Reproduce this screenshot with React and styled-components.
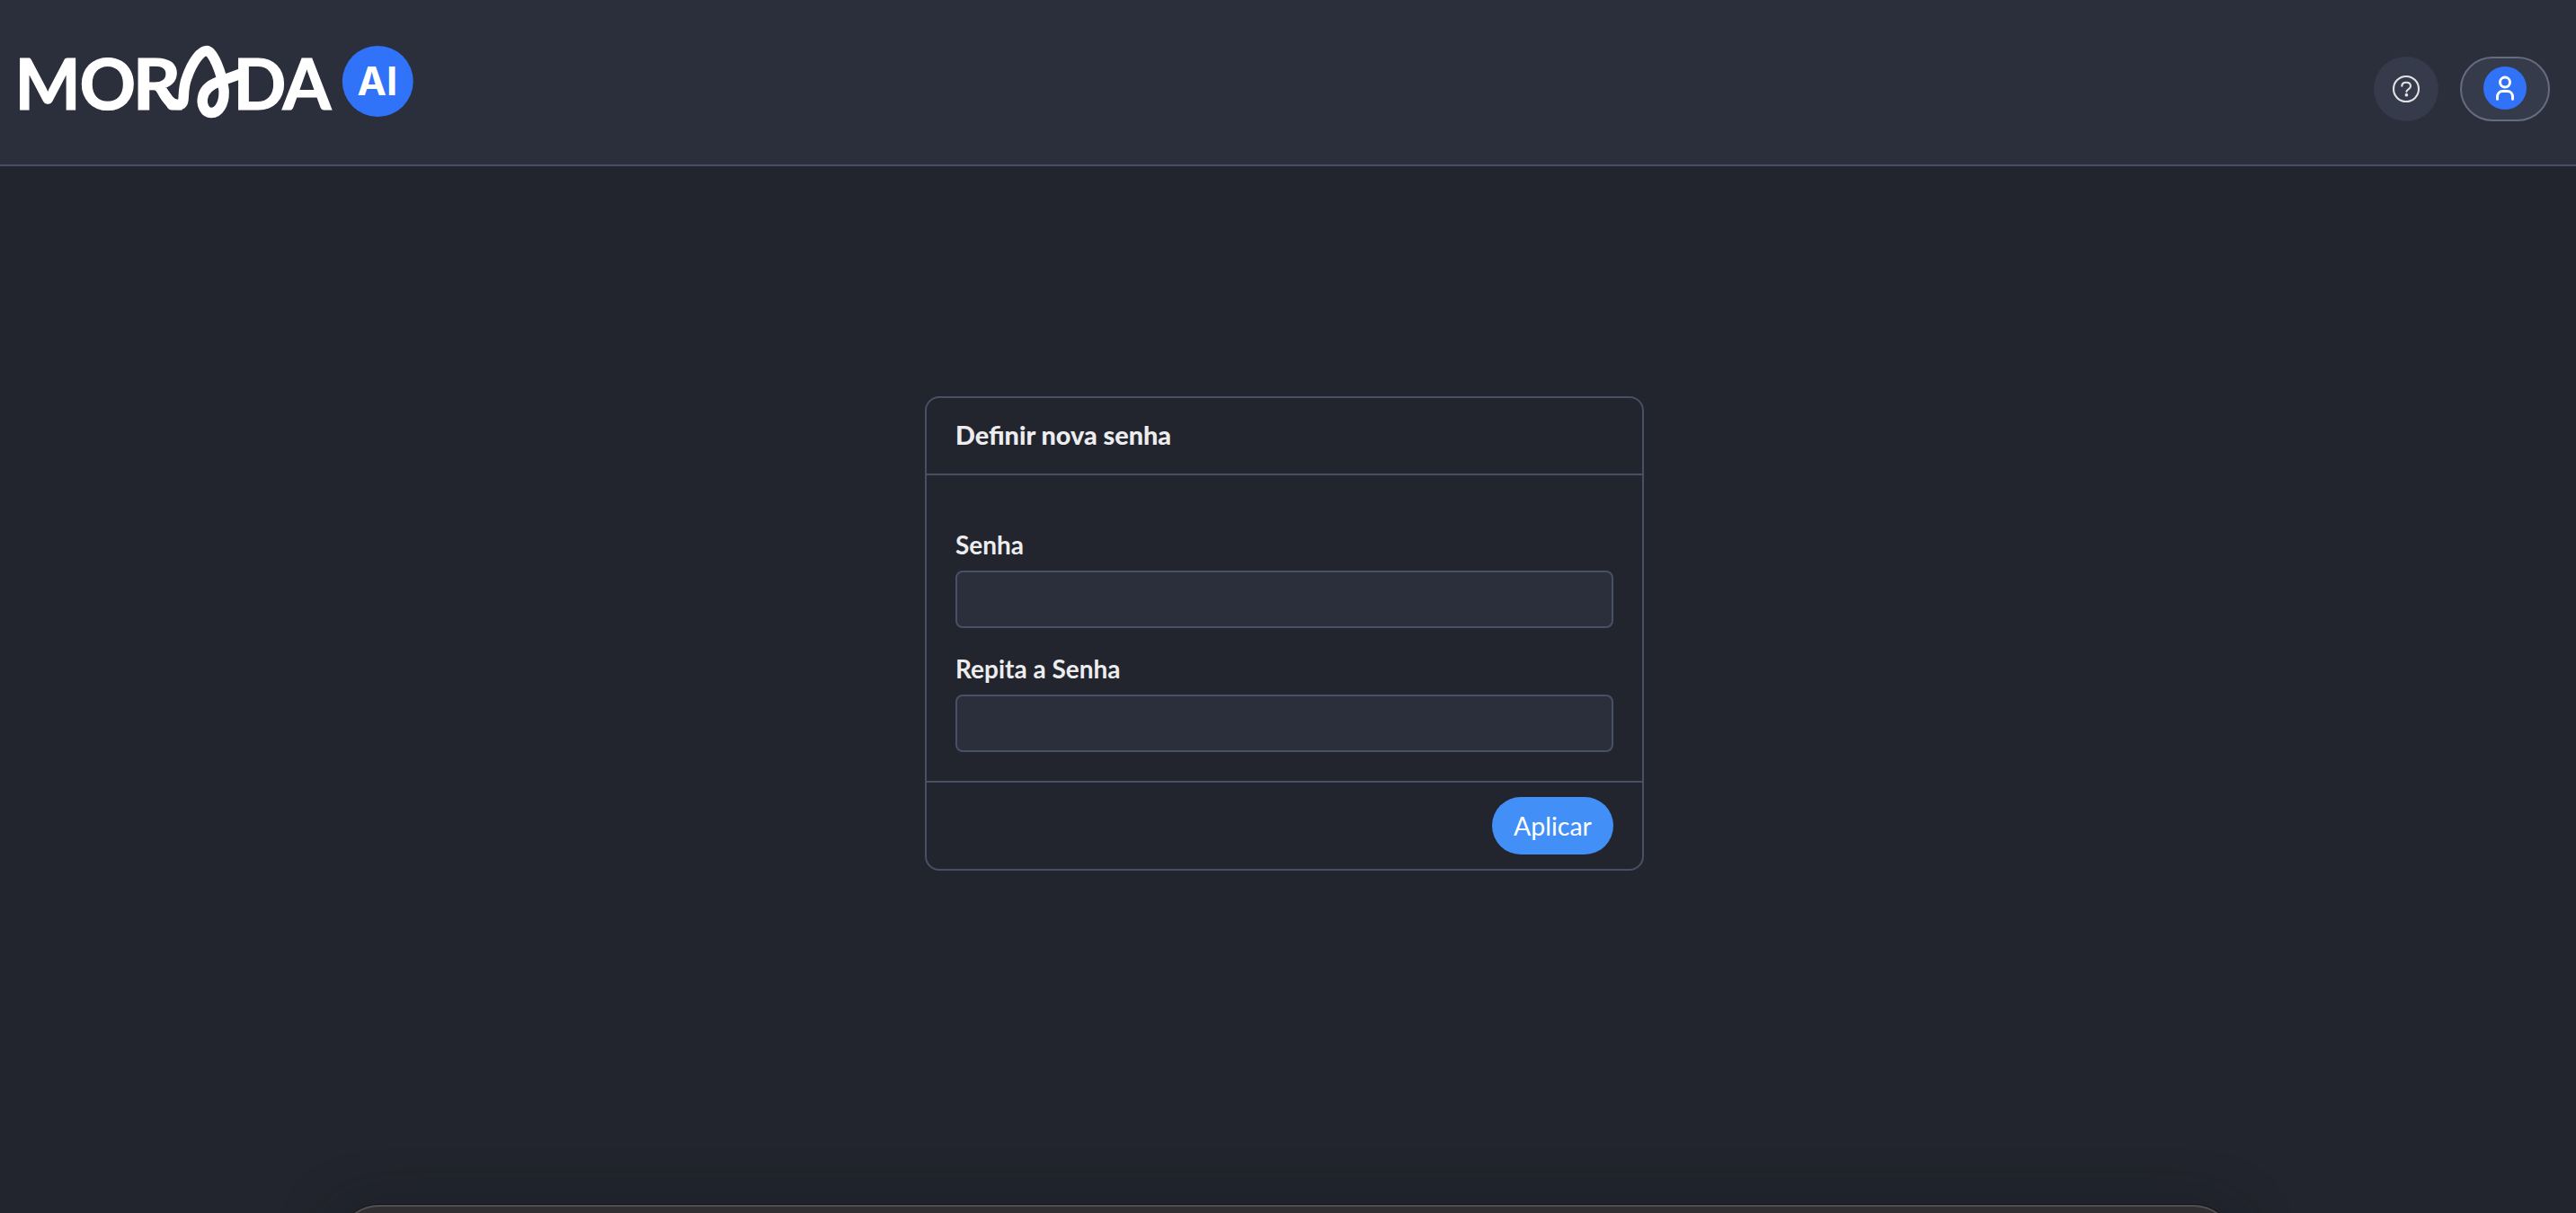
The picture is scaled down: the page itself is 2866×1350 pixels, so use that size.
import styled, { createGlobalStyle, ThemeProvider } from "styled-components";

const theme = {
  page: "#22252d",
  surface: "#2b2f3b",
  raised: "#363b4b",
  line: "#495066",
  pillLine: "#666c80",
  text: "#ededf0",
  brand: "#3072f8",
  button: "#428ff7",
};

const GlobalStyle = createGlobalStyle`
  * {
    box-sizing: border-box;
  }
  body {
    margin: 0;
    background: ${theme.page};
    color: ${theme.text};
    font-family: Lato, "Liberation Sans", sans-serif;
    font-size: 28px;
  }
`;

const Page = styled.div`
  position: relative;
  display: flex;
  flex-direction: column;
  height: 1350px;
  overflow: hidden;
`;

const Header = styled.header`
  display: flex;
  justify-content: space-between;
  height: 185px;
  flex: none;
  border-bottom: 2px solid ${(p) => p.theme.line};
  padding: 44px 29px 0 16px;
  background: ${(p) => p.theme.surface};
`;

const LogoMark = styled.svg`
  display: block;
  text {
    font-family: Lato, "Liberation Sans", sans-serif;
    font-size: 77.5px;
    font-weight: 700;
    fill: #fff;
    stroke: #fff;
    stroke-width: 1.2px;
  }
  .ai {
    font-family: Inter, "Liberation Sans", sans-serif;
    font-size: 43.5px;
    stroke: none;
  }
`;

const Actions = styled.div`
  display: flex;
  gap: 24px;
  padding-top: 19px;
`;

const RoundButton = styled.button`
  display: flex;
  align-items: center;
  justify-content: center;
  width: ${(p) => (p.$pill ? "100px" : "72px")};
  height: 72px;
  padding: 0;
  border: ${(p) => (p.$pill ? `2px solid ${p.theme.pillLine}` : "none")};
  border-radius: 36px;
  background: ${(p) => p.theme.raised};
`;

const Avatar = styled.span`
  display: flex;
  align-items: center;
  justify-content: center;
  width: 48px;
  height: 48px;
  margin-bottom: 2px;
  border-radius: 50%;
  background: ${(p) => p.theme.brand};
`;

const Main = styled.main`
  display: flex;
  justify-content: center;
  align-items: flex-start;
  padding: 256px 8px 0 0;
`;

const Card = styled.form`
  width: 800px;
  border: 2px solid ${(p) => p.theme.line};
  border-radius: 16px;
`;

const CardHeader = styled.div`
  display: flex;
  align-items: center;
  height: 86px;
  padding: 0 32px 2px;
  border-bottom: 2px solid ${(p) => p.theme.line};
  h1 {
    margin: 0;
    font-size: 28.8px;
    font-weight: 900;
  }
`;

const CardBody = styled.div`
  display: flex;
  flex-direction: column;
  gap: 28px;
  padding: 60px 32px 32px;
`;

const Field = styled.label`
  display: flex;
  flex-direction: column;
  gap: 12px;
  font-weight: 700;
  line-height: 34px;
`;

const Input = styled.input`
  height: 64px;
  border: 2px solid ${(p) => p.theme.line};
  border-radius: 8px;
  padding: 0 16px;
  background: ${(p) => p.theme.surface};
  color: inherit;
  font: inherit;
`;

const CardFooter = styled.div`
  display: flex;
  justify-content: flex-end;
  border-top: 2px solid ${(p) => p.theme.line};
  padding: 16px 32px;
`;

const SubmitButton = styled.button`
  width: 135px;
  height: 64px;
  border: none;
  border-radius: 32px;
  padding: 0;
  background: ${(p) => p.theme.button};
  color: #fff;
  font: inherit;
  font-size: 28.5px;
`;

// floating bar that peeks in over the bottom edge
const Dock = styled.div`
  position: absolute;
  top: 1341px;
  left: 374px;
  width: 2114px;
  height: 120px;
  border: 2px solid #505052;
  border-radius: 48px;
  background: #322f33;
  box-shadow: 0 0 0 1px #14151a, 0 8px 60px rgba(22, 26, 38, 0.55);
`;

function Logo() {
  return (
    <LogoMark width="450" height="96" viewBox="16 44 450 96">
      <text x="16.500 88.500" y="121.500">MO</text>
      <text x="147.500" y="121.500" textLength="54" lengthAdjust="spacingAndGlyphs">R</text>
      <text x="259.500 314.500" y="121.500">DA</text>
      <path
        d="M180 100C185 111 191 117 199 116.500C208 116 201 104 208 86C214 69 223 56.500 230 56.500C237 56.500 247 82 249 100C250 116 243 125.500 235 125.500C228 125.500 224 117 225.500 109C227 99 235 94 243 91L268 82"
        fill="none"
        stroke="#fff"
        strokeWidth="11.500"
      />
      <circle cx="420.300" cy="90.500" r="39.500" fill={theme.brand} />
      <text className="ai" x="397.500" y="105.500">AI</text>
    </LogoMark>
  );
}

function HelpIcon() {
  return (
    <svg width="32" height="32" viewBox="0 0 32 32" fill="none" stroke="#e2e2e4" strokeWidth="2.1" strokeLinecap="round">
      <circle cx="16" cy="16" r="14" />
      <path d="M11.300 12.800C11.300 10.400 13.300 8.800 16.100 8.800s4.900 1.600 4.900 4.300c0 3.200-4.600 3.200-4.600 5.900" />
      <circle cx="16.400" cy="22.700" r="0.800" fill="#e2e2e4" />
    </svg>
  );
}

function UserIcon() {
  return (
    <svg width="28" height="32" viewBox="0 0 28 32" fill="none" stroke="#fff" strokeWidth="3" strokeLinecap="round">
      <circle cx="14" cy="9.600" r="5.500" />
      <path d="M5.500 28.300v-2.500c0-4 2.500-6.200 6-6.200h5c3.500 0 6 2.200 6 6.200v2.500" />
    </svg>
  );
}

function App() {
  return (
    <ThemeProvider theme={theme}>
      <GlobalStyle />
      <Page>
        <Header>
          <Logo />
          <Actions>
            <RoundButton>
              <HelpIcon />
            </RoundButton>
            <RoundButton $pill>
              <Avatar>
                <UserIcon />
              </Avatar>
            </RoundButton>
          </Actions>
        </Header>
        <Main>
          <Card>
            <CardHeader>
              <h1>Definir nova senha</h1>
            </CardHeader>
            <CardBody>
              <Field>
                Senha
                <Input type="password" />
              </Field>
              <Field>
                Repita a Senha
                <Input type="password" />
              </Field>
            </CardBody>
            <CardFooter>
              <SubmitButton type="button">Aplicar</SubmitButton>
            </CardFooter>
          </Card>
        </Main>
        <Dock />
      </Page>
    </ThemeProvider>
  );
}

export default App;
